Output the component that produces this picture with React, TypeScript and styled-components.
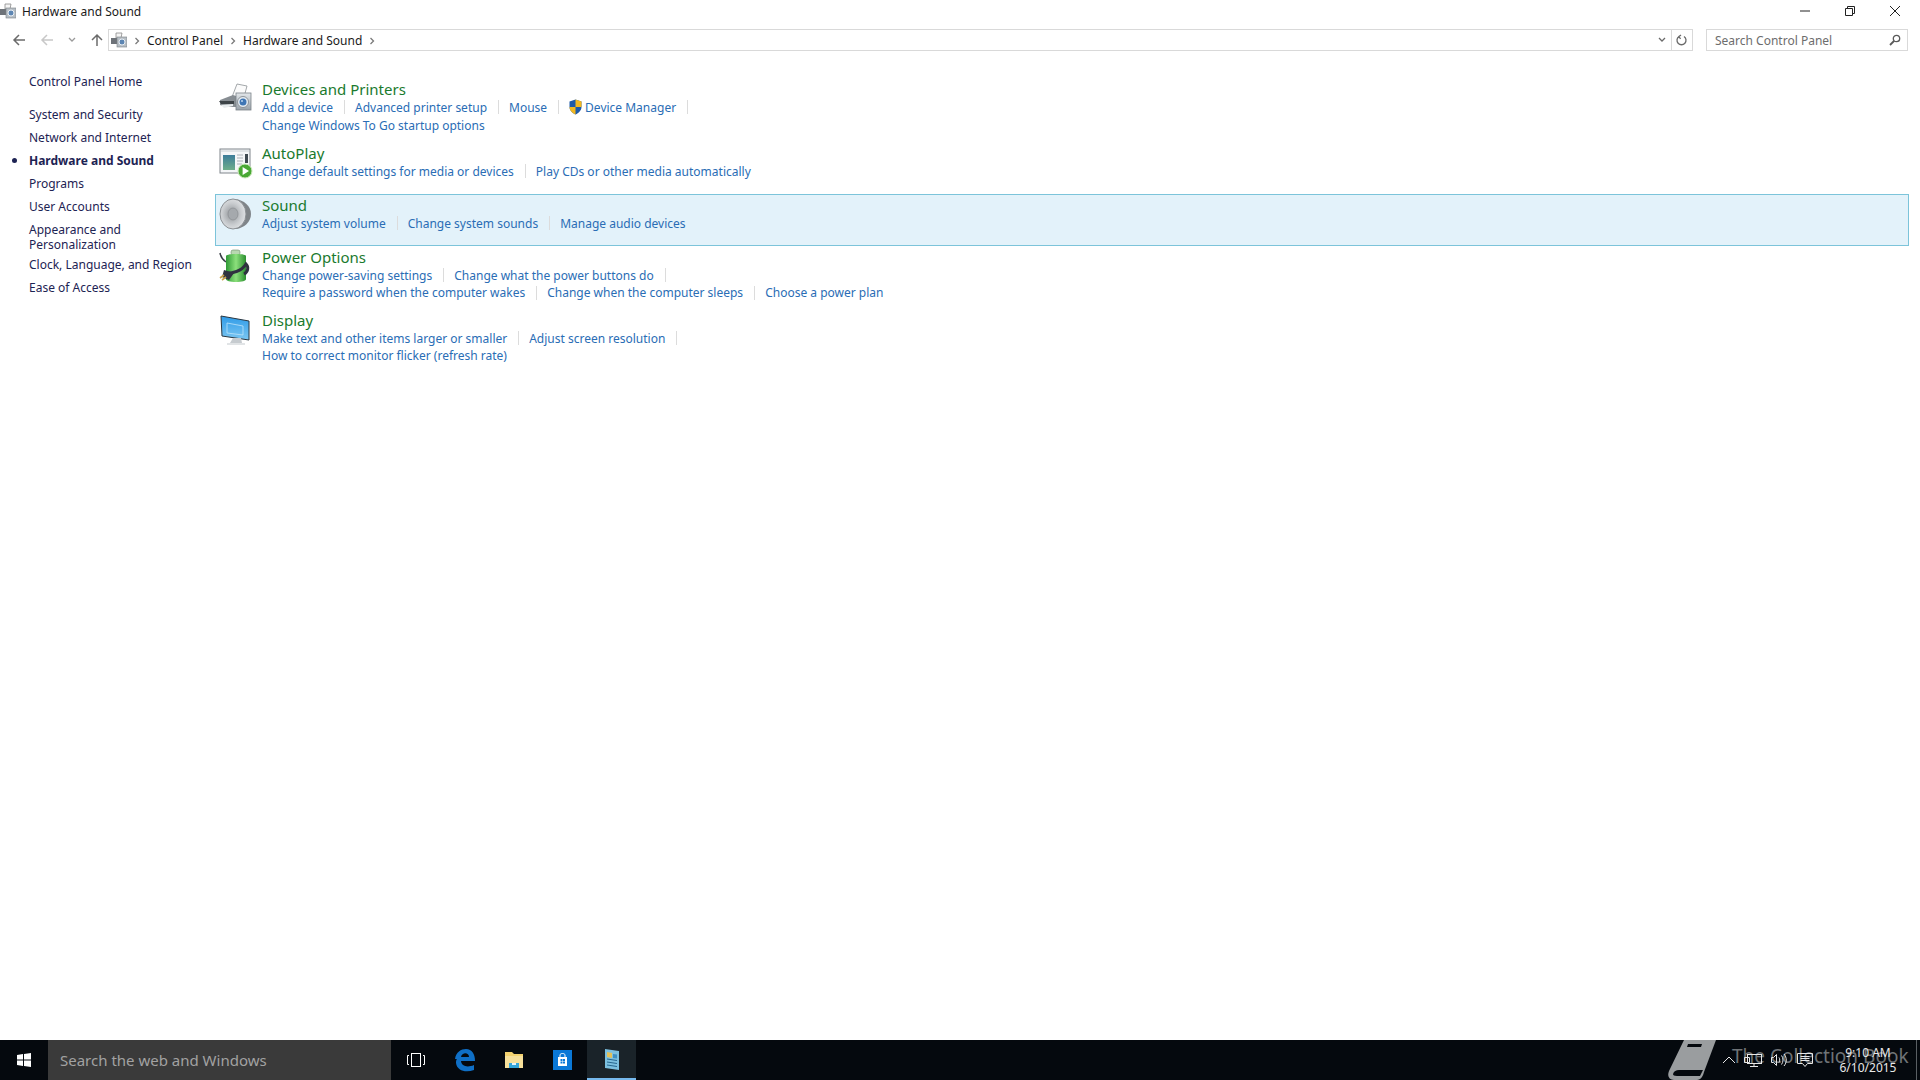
import styled, { createGlobalStyle } from "styled-components";

const GlobalStyle = createGlobalStyle`
  html, body {
    margin: 0;
    padding: 0;
    background: #fff;
    font-family: "Noto Sans", "Open Sans", sans-serif;
    overflow: hidden;
  }
`;

const Page = styled.div`
  width: 1920px;
  height: 1080px;
  display: flex;
  flex-direction: column;
`;

const TitleBar = styled.header`
  height: 22px;
  display: flex;
  align-items: center;
  font-size: 12px;
  color: #1a1a1a;
`;

const TitleText = styled.span`
  margin-left: 6px;
  flex: 1;
`;

const WindowButtons = styled.div`
  display: flex;
  align-items: center;
  padding-right: 3px;
`;

const WindowButton = styled.div`
  width: 45px;
  height: 20px;
  display: flex;
  align-items: center;
  justify-content: center;
`;

const NavBar = styled.nav`
  height: 36px;
  display: flex;
  align-items: center;
`;

const NavButtons = styled.div`
  width: 108px;
  display: flex;
  align-items: center;
  padding-left: 12px;
  box-sizing: border-box;
  gap: 14px;
`;

const AddressBox = styled.div`
  width: 1585px;
  height: 22px;
  box-sizing: border-box;
  border: 1px solid #d9d9d9;
  display: flex;
  align-items: center;
  padding-left: 2px;
  font-size: 12px;
  color: #1a1a1a;
`;

const Crumb = styled.span`
  margin: 0 7px 0 7px;
`;

const AddressEnd = styled.div`
  margin-left: auto;
  display: flex;
  align-items: center;
  height: 100%;
`;

const AddressDrop = styled.div`
  width: 19px;
  height: 100%;
  display: flex;
  align-items: center;
  justify-content: center;
  border-right: 1px solid #d9d9d9;
`;

const AddressRefresh = styled.div`
  width: 20px;
  height: 100%;
  display: flex;
  align-items: center;
  justify-content: center;
`;

const SearchBox = styled.div`
  width: 202px;
  height: 22px;
  box-sizing: border-box;
  margin-left: 13px;
  border: 1px solid #d9d9d9;
  display: flex;
  align-items: center;
  justify-content: space-between;
  padding: 0 6px 0 8px;
  font-size: 12px;
  color: #6d6d6d;
`;

const Content = styled.div`
  flex: 1;
  display: flex;
  min-height: 0;
`;

const Sidebar = styled.aside`
  width: 215px;
  box-sizing: border-box;
  padding: 16px 0 0 29px;
  font-size: 12px;
  line-height: 15px;
  color: #1d2353;
`;

const SideHome = styled.div`
  margin-bottom: 18px;
`;

const SideItem = styled.div<{ $active?: boolean; $tight?: boolean }>`
  position: relative;
  margin-bottom: ${(p) => (p.$tight ? "5px" : "8px")};
  font-weight: ${(p) => (p.$active ? 700 : 400)};
  ${(p) =>
    p.$active &&
    `&::before {
      content: "";
      position: absolute;
      left: -17px;
      top: 5px;
      width: 5px;
      height: 5px;
      border-radius: 50%;
      background: #1d2353;
    }`}
`;

const Main = styled.main`
  flex: 1;
  padding: 20px 11px 0 0;
`;

const Row = styled.section<{ $hot?: boolean }>`
  display: flex;
  box-sizing: border-box;
  border: 1px solid ${(p) => (p.$hot ? "#7cc4da" : "transparent")};
  background: ${(p) => (p.$hot ? "#e3f2fa" : "transparent")};
  padding: 1px 0 7px;
`;

const RowIcon = styled.div`
  width: 46px;
  flex: none;
  padding: 1px 0 0 2px;
  box-sizing: border-box;
`;

const RowBody = styled.div`
  flex: 1;
`;

const RowTitle = styled.div`
  font-size: 15px;
  line-height: 18px;
  color: #1a7a2e;
`;

const LinkLine = styled.div<{ $short?: boolean }>`
  display: flex;
  align-items: center;
  height: ${(p) => (p.$short ? "17px" : "18px")};
  font-size: 12px;
  color: #2a6db5;
`;

const RowLink = styled.span<{ $sep?: boolean }>`
  display: inline-flex;
  align-items: center;
  height: 14px;
  ${(p) =>
    p.$sep &&
    `padding-right: 11px;
     margin-right: 10px;
     border-right: 1px solid #dcdcdc;`}
`;

const ShieldWrap = styled.span`
  display: inline-flex;
  margin-right: 3px;
`;

const Taskbar = styled.footer`
  position: relative;
  height: 40px;
  display: flex;
  align-items: stretch;
  background: #05090e;
`;

const StartButton = styled.div`
  width: 48px;
  display: flex;
  align-items: center;
  justify-content: center;
`;

const TaskSearch = styled.div`
  width: 343px;
  background: #3a3a3a;
  display: flex;
  align-items: center;
  padding-left: 12px;
  box-sizing: border-box;
  font-size: 15px;
  color: #a2a2a2;
`;

const TaskButton = styled.div<{ $active?: boolean }>`
  width: 49px;
  display: flex;
  align-items: center;
  justify-content: center;
  box-sizing: border-box;
  ${(p) =>
    p.$active &&
    `background: #1a2329;
     border-bottom: 2px solid #76b9ed;`}
`;

const Tray = styled.div`
  margin-left: auto;
  display: flex;
  align-items: center;
  gap: 8px;
  position: relative;
`;

const Clock = styled.div`
  width: 80px;
  margin-left: 6px;
  text-align: center;
  font-size: 12px;
  line-height: 15px;
  color: #e8e8e8;
`;

const ShowDesktop = styled.div`
  width: 1px;
  height: 100%;
  margin-right: 3px;
  background: #5a5f63;
`;

const Watermark = styled.div`
  position: absolute;
  left: 1668px;
  top: 0;
  height: 40px;
  display: flex;
  align-items: center;
  gap: 12px;
  font-size: 19px;
  color: #6f7376;
  white-space: nowrap;
`;

const WatermarkText = styled.span`
  margin-top: -9px;
`;

const HardwareIcon = ({ size = 16 }: { size?: number }) => (
  <svg width={size} height={size} viewBox="0 0 16 16">
    <path d="M5 1h6l-1 5H5z" fill="#f5f5f5" stroke="#8a8a8a" strokeWidth="0.8" />
    <rect x="0" y="6" width="9" height="6" fill="#6d7278" />
    <rect x="6" y="5" width="10" height="10" fill="#b7bec4" stroke="#7b8086" strokeWidth="0.6" />
    <circle cx="11" cy="10" r="3" fill="#5d86b3" stroke="#e8eef3" />
  </svg>
);

const DevicesIcon = () => (
  <svg width="36" height="36" viewBox="0 0 36 36">
    <defs>
      <linearGradient id="camBody" x1="0" y1="0" x2="0" y2="1">
        <stop offset="0" stopColor="#e3e7ea" />
        <stop offset="1" stopColor="#99a2aa" />
      </linearGradient>
    </defs>
    <path d="M19 3l10 2-3 11H14z" fill="#fbfbfb" stroke="#8d9296" strokeWidth="0.8" />
    <path d="M2 19l13-5 6 2v10H8L2 24z" fill="#878d92" />
    <path d="M1 20h15v3H3z" fill="#3d4347" />
    <path d="M3 24l12-1v2l-9 2z" fill="#e8ecee" />
    <rect x="18" y="12" width="15" height="17" fill="url(#camBody)" stroke="#7b8288" strokeWidth="0.8" />
    <circle cx="25" cy="21" r="5.5" fill="#e6edf3" stroke="#7b8288" strokeWidth="0.8" />
    <circle cx="25" cy="21" r="3.5" fill="#3f76b5" />
    <circle cx="24" cy="20" r="1" fill="#bcd7ef" />
  </svg>
);

const AutoPlayIcon = () => (
  <svg width="36" height="36" viewBox="0 0 36 36">
    <defs>
      <linearGradient id="apPic" x1="0" y1="0" x2="0" y2="1">
        <stop offset="0" stopColor="#3b7c9a" />
        <stop offset="1" stopColor="#6fae8a" />
      </linearGradient>
    </defs>
    <rect x="2" y="4" width="30" height="24" fill="#f4f6f8" stroke="#80868c" />
    <rect x="3" y="5" width="28" height="2" fill="#dfe3e6" />
    <rect x="5" y="10" width="12" height="15" fill="url(#apPic)" />
    <path d="M19 10h6M19 13h6M19 16h6M19 19h5" stroke="#a9b0b5" strokeWidth="1.2" />
    <rect x="27" y="9" width="3" height="9" fill="#3f4a52" />
    <circle cx="27" cy="26" r="7" fill="#49a834" stroke="#cfeabf" />
    <path d="M24.6 22l6.4 4-6.4 4z" fill="#fff" />
  </svg>
);

const SoundIcon = () => (
  <svg width="36" height="36" viewBox="0 0 36 36">
    <defs>
      <radialGradient id="cone" cx="0.45" cy="0.5" r="0.6">
        <stop offset="0" stopColor="#8e9296" />
        <stop offset="0.6" stopColor="#c9cccf" />
        <stop offset="1" stopColor="#e6e8ea" />
      </radialGradient>
    </defs>
    <path d="M17 2c9 1 16 7 16 15s-7 14-15 15z" fill="#7f8488" />
    <ellipse cx="15" cy="17" rx="13" ry="15" fill="url(#cone)" stroke="#8b8f93" />
    <ellipse cx="15" cy="17" rx="5" ry="6" fill="#a5a9ad" stroke="#84888c" strokeWidth="0.6" />
  </svg>
);

const PowerIcon = () => (
  <svg width="36" height="36" viewBox="0 0 36 36">
    <defs>
      <linearGradient id="bat" x1="0" y1="0" x2="1" y2="0">
        <stop offset="0" stopColor="#2f9a35" />
        <stop offset="0.5" stopColor="#8ce07c" />
        <stop offset="1" stopColor="#2b8f30" />
      </linearGradient>
    </defs>
    <path d="M2 4c1 5 3 7 6 9" fill="none" stroke="#3a3f47" strokeWidth="1.5" />
    <rect x="13" y="1" width="9" height="5" rx="2" fill="#b8d8b0" stroke="#6d8a6a" strokeWidth="0.6" />
    <path d="M8 7c0-1 3-2 10-2s10 1 10 2v23c0 2-4 3-10 3s-10-1-10-3z" fill="url(#bat)" />
    <path d="M6 24c8 1 18-2 22-9 3 3 2 8-2 10" fill="none" stroke="#2f3140" strokeWidth="3" />
    <path d="M6 21l10 3-5 7-7-3z" fill="#30333f" />
    <path d="M2 29l4-3M4 31l4-3" stroke="#c9a34c" strokeWidth="1.6" />
  </svg>
);

const DisplayIcon = () => (
  <svg width="36" height="36" viewBox="0 0 36 36">
    <defs>
      <linearGradient id="scr" x1="0" y1="0" x2="0" y2="1">
        <stop offset="0" stopColor="#2f9be8" />
        <stop offset="1" stopColor="#7cc7f2" />
      </linearGradient>
    </defs>
    <path d="M3 4l28 5v19L4 24z" fill="url(#scr)" stroke="#2a3640" strokeWidth="1" />
    <path d="M9 11l16 3v9L9 21z" fill="none" stroke="#bde3fa" strokeWidth="0.8" />
    <path d="M15 26h8l1 5H12z" fill="#c6cbcf" />
    <path d="M9 31h18v2H9z" fill="#e1e4e6" />
  </svg>
);

const Shield = () => (
  <svg width="13" height="16" viewBox="0 0 13 16">
    <path d="M6.5 0.5L12.5 2.5V8c0 3.5-3 6-6 7.5C3.5 14 0.5 11.500.5 8V2.500z" fill="#1e5aa8" />
    <path d="M6.500.5V8H12.500V2.500z" fill="#f2b820" />
    <path d="M6.500 8H.5c0 3.500 3 6 6 7.500z" fill="#f2b820" />
  </svg>
);

const Chevron = ({ color = "#7a7a7a" }: { color?: string }) => (
  <svg width="6" height="8" viewBox="0 0 6 8">
    <path d="M1.500 1l3 3-3 3" fill="none" stroke={color} strokeWidth="1.300" />
  </svg>
);

const Arrow = ({ color, up }: { color: string; up?: boolean }) => (
  <svg width="14" height="14" viewBox="0 0 14 14" style={up ? { transform: "rotate(90deg)" } : undefined}>
    <path d="M13 7H2M7 2L2 7l5 5" fill="none" stroke={color} strokeWidth="1.500" />
  </svg>
);

const DownTick = ({ color = "#6a6a6a" }: { color?: string }) => (
  <svg width="8" height="6" viewBox="0 0 8 6">
    <path d="M1 1l3 3 3-3" fill="none" stroke={color} strokeWidth="1.300" />
  </svg>
);

const WinLogo = () => (
  <svg width="14" height="14" viewBox="0 0 14 14" fill="#fff">
    <path d="M0 2l6-.9V6.500H0zM7 .9L14 0v6.500H7zM0 7.500h6v5.400L0 12zM7 7.500h7V14l-7-1z" />
  </svg>
);

const TaskViewIcon = () => (
  <svg width="20" height="16" viewBox="0 0 20 16" fill="none" stroke="#fff" strokeWidth="1">
    <rect x="5.500" y="1.500" width="9" height="13" />
    <path d="M3 3.500H1.500v9H3M17 3.500h1.500v9H17" />
  </svg>
);

const EdgeIcon = () => (
  <svg width="22" height="24" viewBox="0 0 22 24">
    <path
      d="M1 11C2 4 7 1 12 1c6 0 9 5 9 12H7c.5 5 6 7 13 4v5c-8 3-17 1-18-7 0-3 1-6 5-8-1 1-2 2-2 4zM7 9h8c0-5-7-5-8 0z"
      fill="#0f6fc6"
    />
  </svg>
);

const FolderIcon = () => (
  <svg width="20" height="20" viewBox="0 0 20 20">
    <path d="M1 2h7l2 2h9v14H1z" fill="#f3d26f" />
    <path d="M1 6h18v12H1z" fill="#f7e09a" />
    <path d="M5 13h10v5H5z" fill="#35a5d8" />
    <path d="M8 13h4v2H8z" fill="#e8f4fa" />
  </svg>
);

const StoreIcon = () => (
  <svg width="19" height="20" viewBox="0 0 19 20">
    <rect width="19" height="20" fill="#0a78d7" />
    <path d="M5 7h9v9H5z" fill="#fff" />
    <path d="M7 7V5c0-2 5-2 5 0v2" fill="none" stroke="#fff" />
    <path d="M7.500 9h2v2h-2zM10 9h2v2h-2zM7.500 11.500h2v2h-2zM10 11.500h2v2h-2z" fill="#0a78d7" />
  </svg>
);

const PanelIcon = () => (
  <svg width="14" height="22" viewBox="0 0 14 22">
    <path d="M0 1l14 2v19L0 20z" fill="#7cc0df" />
    <path d="M2 4l5 1v5l-5-1z" fill="#e3c15a" />
    <path d="M8 6l4 .5v4L8 10z" fill="#3f8fc1" />
    <path d="M2 11l10 1.500M2 14l10 1.500M2 17l10 1.500" stroke="#26678f" strokeWidth="1" />
  </svg>
);

const BookIcon = () => (
  <svg width="52" height="40" viewBox="0 0 52 40">
    <path d="M16 0h32l-12 32c-1 4-3 8-7 8H6C1 40-1 36 1 31z" fill="#9a9d9f" />
    <path d="M5 34c1-3 3-4 6-4h24l-3 6H9c-3 0-4-1-4-2z" fill="#05090e" />
    <path d="M20 4h14l-1 3H19z" fill="#05090e" />
  </svg>
);

const TrayChevron = () => (
  <svg width="14" height="8" viewBox="0 0 14 8" fill="none" stroke="#e8e8e8">
    <path d="M1 7l6-6 6 6" />
  </svg>
);

const NetworkIcon = () => (
  <svg width="18" height="16" viewBox="0 0 18 16" fill="none" stroke="#e8e8e8">
    <rect x="3.500" y="2.500" width="14" height="9" />
    <path d="M.5 5.500h5v5h-5zM10 11.500v3M6 14.500h8" />
  </svg>
);

const VolumeIcon = () => (
  <svg width="18" height="16" viewBox="0 0 18 16" fill="none" stroke="#e8e8e8">
    <path d="M1.500 5.500h2l3-3v11l-3-3h-2zM9 5.500c1 1.500 1 3.500 0 5M11.500 3.500c2 2.500 2 6.500 0 9M14 2c3 3.500 3 8.500 0 12" />
  </svg>
);

const ActionIcon = () => (
  <svg width="18" height="16" viewBox="0 0 18 16" fill="none" stroke="#e8e8e8">
    <path d="M1.500 1.500h15v10h-5l-2.500 3-2.500-3h-5zM4.500 4.500h9M4.500 6.500h9M4.500 8.500h9" />
  </svg>
);

type Entry = { text: string; sep?: boolean; shield?: boolean };
type Group = { title: string; icon: React.ReactNode; lines: Entry[][]; hot?: boolean; shortLast?: boolean };

const groups: Group[] = [
  {
    title: "Devices and Printers",
    icon: <DevicesIcon />,
    lines: [
      [
        { text: "Add a device", sep: true },
        { text: "Advanced printer setup", sep: true },
        { text: "Mouse", sep: true },
        { text: "Device Manager", sep: true, shield: true },
      ],
      [{ text: "Change Windows To Go startup options" }],
    ],
  },
  {
    title: "AutoPlay",
    icon: <AutoPlayIcon />,
    lines: [
      [
        { text: "Change default settings for media or devices", sep: true },
        { text: "Play CDs or other media automatically" },
      ],
    ],
  },
  {
    title: "Sound",
    icon: <SoundIcon />,
    hot: true,
    lines: [
      [
        { text: "Adjust system volume", sep: true },
        { text: "Change system sounds", sep: true },
        { text: "Manage audio devices" },
      ],
    ],
  },
  {
    title: "Power Options",
    icon: <PowerIcon />,
    shortLast: true,
    lines: [
      [
        { text: "Change power-saving settings", sep: true },
        { text: "Change what the power buttons do", sep: true },
      ],
      [
        { text: "Require a password when the computer wakes", sep: true },
        { text: "Change when the computer sleeps", sep: true },
        { text: "Choose a power plan" },
      ],
    ],
  },
  {
    title: "Display",
    icon: <DisplayIcon />,
    shortLast: true,
    lines: [
      [
        { text: "Make text and other items larger or smaller", sep: true },
        { text: "Adjust screen resolution", sep: true },
      ],
      [{ text: "How to correct monitor flicker (refresh rate)" }],
    ],
  },
];

const sideItems = ["System and Security", "Network and Internet", "Hardware and Sound", "Programs", "User Accounts"];

export default function App() {
  return (
    <Page>
      <GlobalStyle />
      <TitleBar>
        <HardwareIcon />
        <TitleText>Hardware and Sound</TitleText>
        <WindowButtons>
          <WindowButton>
            <svg width="12" height="12" viewBox="0 0 12 12"><path d="M1 6h10" stroke="#222" /></svg>
          </WindowButton>
          <WindowButton>
            <svg width="12" height="12" viewBox="0 0 12 12" fill="none" stroke="#222"><path d="M3.500 3V1.500h7v7H8.500M1.500 3.500h7v7h-7z" /></svg>
          </WindowButton>
          <WindowButton>
            <svg width="12" height="12" viewBox="0 0 12 12"><path d="M1 1l10 10M11 1L1 11" stroke="#222" /></svg>
          </WindowButton>
        </WindowButtons>
      </TitleBar>
      <NavBar>
        <NavButtons>
          <Arrow color="#6b6b6b" />
          <Arrow color="#c8c8c8" />
          <DownTick color="#9a9a9a" />
          <Arrow color="#6b6b6b" up />
        </NavButtons>
        <AddressBox>
          <HardwareIcon />
          <Crumb><Chevron /></Crumb>
          <span>Control Panel</span>
          <Crumb><Chevron /></Crumb>
          <span>Hardware and Sound</span>
          <Crumb><Chevron /></Crumb>
          <AddressEnd>
            <AddressDrop><DownTick /></AddressDrop>
            <AddressRefresh>
              <svg width="12" height="13" viewBox="0 0 12 13" fill="none" stroke="#6a6a6a" strokeWidth="1.300">
                <path d="M3 2.500a4.500 4.500 0 1 0 5 0M5 1l-2 1.500L4.500 5" />
              </svg>
            </AddressRefresh>
          </AddressEnd>
        </AddressBox>
        <SearchBox>
          <span>Search Control Panel</span>
          <svg width="12" height="12" viewBox="0 0 12 12" fill="none" stroke="#5a5a5a" strokeWidth="1.300">
            <circle cx="7.500" cy="4.500" r="3.200" />
            <path d="M5 7l-4 4" strokeWidth="1.800" />
          </svg>
        </SearchBox>
      </NavBar>
      <Content>
        <Sidebar>
          <SideHome>Control Panel Home</SideHome>
          {sideItems.map((item) => (
            <SideItem key={item} $active={item === "Hardware and Sound"}>{item}</SideItem>
          ))}
          <SideItem $tight>
            Appearance and
            <br />
            Personalization
          </SideItem>
          <SideItem>Clock, Language, and Region</SideItem>
          <SideItem>Ease of Access</SideItem>
        </Sidebar>
        <Main>
          {groups.map((group) => (
            <Row key={group.title} $hot={group.hot}>
              <RowIcon>{group.icon}</RowIcon>
              <RowBody>
                <RowTitle>{group.title}</RowTitle>
                {group.lines.map((line, i) => (
                  <LinkLine key={i} $short={group.shortLast && i > 0}>
                    {line.map((entry) => (
                      <RowLink key={entry.text} $sep={entry.sep}>
                        {entry.shield && <ShieldWrap><Shield /></ShieldWrap>}
                        {entry.text}
                      </RowLink>
                    ))}
                  </LinkLine>
                ))}
              </RowBody>
            </Row>
          ))}
        </Main>
      </Content>
      <Taskbar>
        <StartButton><WinLogo /></StartButton>
        <TaskSearch>Search the web and Windows</TaskSearch>
        <TaskButton><TaskViewIcon /></TaskButton>
        <TaskButton><EdgeIcon /></TaskButton>
        <TaskButton><FolderIcon /></TaskButton>
        <TaskButton><StoreIcon /></TaskButton>
        <TaskButton $active><PanelIcon /></TaskButton>
        <Watermark>
          <BookIcon />
          <WatermarkText>The Collection Book</WatermarkText>
        </Watermark>
        <Tray>
          <TrayChevron />
          <NetworkIcon />
          <VolumeIcon />
          <ActionIcon />
          <Clock>
            9:10 AM
            <br />
            6/10/2015
          </Clock>
          <ShowDesktop />
        </Tray>
      </Taskbar>
    </Page>
  );
}
